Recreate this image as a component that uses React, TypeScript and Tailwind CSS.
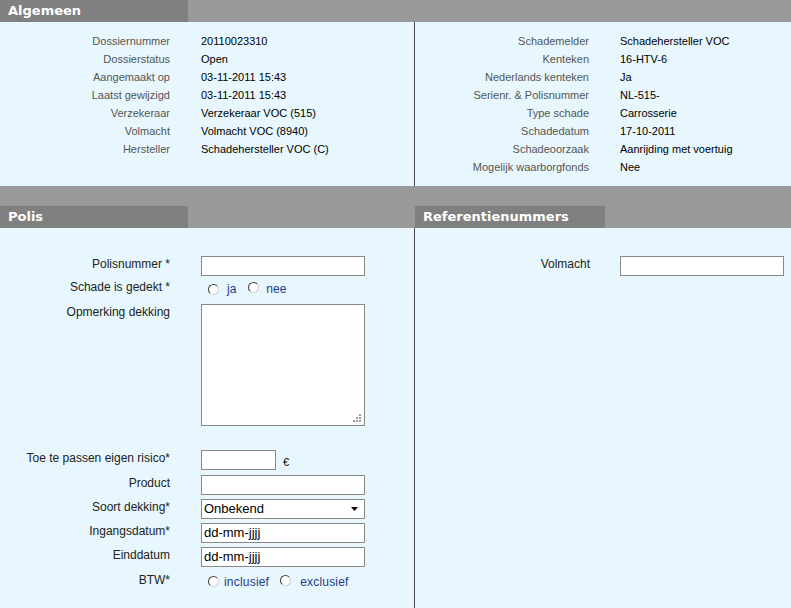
import React from 'react';

const ALG_LEFT = [
  ['Dossiernummer', '20110023310'],
  ['Dossierstatus', 'Open'],
  ['Aangemaakt op', '03-11-2011 15:43'],
  ['Laatst gewijzigd', '03-11-2011 15:43'],
  ['Verzekeraar', 'Verzekeraar VOC (515)'],
  ['Volmacht', 'Volmacht VOC (8940)'],
  ['Hersteller', 'Schadehersteller VOC (C)'],
];

const ALG_RIGHT = [
  ['Schademelder', 'Schadehersteller VOC'],
  ['Kenteken', '16-HTV-6'],
  ['Nederlands kenteken', 'Ja'],
  ['Serienr. & Polisnummer', 'NL-515-'],
  ['Type schade', 'Carrosserie'],
  ['Schadedatum', '17-10-2011'],
  ['Schadeoorzaak', 'Aanrijding met voertuig'],
  ['Mogelijk waarborgfonds', 'Nee'],
];

function Tab({ label, w }: { label: string; w: string }) {
  return (
    <div className={`${w} h-[22px] bg-[#808080] text-white font-bold text-[13px] leading-[22px] pl-[8px] font-['DejaVu_Sans',sans-serif]`}>
      {label}
    </div>
  );
}

function Radio() {
  return (
    <span className="inline-block w-[11px] h-[11px] rounded-full bg-white border border-t-[#404040] border-l-[#404040] border-r-[#d0d0d0] border-b-[#d0d0d0]" />
  );
}

function Field({ label, top = 'pt-[0px]', children }: { label: string; top?: string; children: React.ReactNode }) {
  return (
    <div className="flex items-start">
      <div className={`w-[170px] text-right text-[12px] leading-[16px] text-[#222] ${top}`}>{label}</div>
      <div className="ml-[31px]">{children}</div>
    </div>
  );
}

const inputCls = 'block w-[164px] h-[20px] border border-[#888] bg-white px-[2px] text-[13px] text-black outline-none';

export default function App() {
  return (
    <div className="w-[791px] h-[608px] overflow-hidden bg-[#e7f7fd] font-['Liberation_Sans',Arial,sans-serif]">
      {/* Algemeen */}
      <div className="flex h-[22px] bg-[#999]">
        <Tab label="Algemeen" w="w-[188px]" />
      </div>
      <div className="flex h-[164px]">
        <div className="w-[415px] border-r border-[#4a4a4a] pt-[10px]">
          {ALG_LEFT.map(([l, v]) => (
            <div key={l} className="flex h-[18px] items-center text-[11px]">
              <div className="w-[170px] text-right text-[#555]">{l}</div>
              <div className="ml-[31px] text-black">{v}</div>
            </div>
          ))}
        </div>
        <div className="flex-1 pt-[10px]">
          {ALG_RIGHT.map(([l, v]) => (
            <div key={l} className="flex h-[18px] items-center text-[11px]">
              <div className="w-[174px] text-right text-[#555]">{l}</div>
              <div className="ml-[31px] text-black">{v}</div>
            </div>
          ))}
        </div>
      </div>
      <div className="h-[20px] bg-[#999]" />

      {/* Polis / Referentienummers */}
      <div className="flex h-[402px]">
        <div className="w-[415px] flex flex-col">
          <div className="flex h-[22px] bg-[#999]">
            <Tab label="Polis" w="w-[188px]" />
          </div>
          <div className="flex-1 border-r border-[#4a4a4a] pt-[28px]">
            <Field label="Polisnummer *">
              <input className={inputCls} />
            </Field>
            <div className="mt-[2px]">
              <Field label="Schade is gedekt *" top="pt-[1px]">
                <div className="flex items-center h-[22px] pl-[7px] text-[12px] text-[#1f3a8a]">
                  <Radio />
                  <span className="ml-[8px]">ja</span>
                  <span className="ml-[12px]"><Radio /></span>
                  <span className="ml-[7px]">nee</span>
                </div>
              </Field>
            </div>
            <div className="mt-[4px]">
              <Field label="Opmerking dekking" top="pt-[0px]">
                <div className="relative">
                  <textarea className="block w-[164px] h-[122px] border border-[#888] bg-white resize-none outline-none" />
                  <svg className="absolute right-[3px] bottom-[3px]" width="9" height="9" viewBox="0 0 9 9">
                    <rect x="6" y="0" width="2" height="2" fill="#999" />
                    <rect x="3" y="3" width="2" height="2" fill="#999" />
                    <rect x="6" y="3" width="2" height="2" fill="#999" />
                    <rect x="0" y="6" width="2" height="2" fill="#999" />
                    <rect x="3" y="6" width="2" height="2" fill="#999" />
                    <rect x="6" y="6" width="2" height="2" fill="#999" />
                  </svg>
                </div>
              </Field>
            </div>
            <div className="mt-[24px]">
              <Field label="Toe te passen eigen risico*">
                <div className="flex items-center">
                  <input className="block w-[75px] h-[20px] border border-[#888] bg-white outline-none" />
                  <span className="ml-[7px] mt-[4px] text-[11px] text-black">€</span>
                </div>
              </Field>
            </div>
            <div className="mt-[4px]">
              <Field label="Product">
                <input className={inputCls} />
              </Field>
            </div>
            <div className="mt-[4px]">
              <Field label="Soort dekking*">
                <div className="relative w-[164px] h-[20px] border border-[#888] bg-white text-[13px] leading-[18px] pl-[2px] text-black">
                  Onbekend
                  <svg className="absolute right-[6px] top-[7px]" width="7" height="4" viewBox="0 0 7 4">
                    <path d="M0 0H7L3.5 4Z" fill="#000" />
                  </svg>
                </div>
              </Field>
            </div>
            <div className="mt-[4px]">
              <Field label="Ingangsdatum*">
                <input className={inputCls} defaultValue="dd-mm-jjjj" />
              </Field>
            </div>
            <div className="mt-[4px]">
              <Field label="Einddatum">
                <input className={inputCls} defaultValue="dd-mm-jjjj" />
              </Field>
            </div>
            <div className="mt-[4px]">
              <Field label="BTW*" top="pt-[1px]">
                <div className="flex items-center h-[22px] pl-[7px] text-[12px] text-[#1f3a8a]">
                  <Radio />
                  <span className="ml-[5px] tracking-[0.2px]">inclusief</span>
                  <span className="ml-[11px]"><Radio /></span>
                  <span className="ml-[9px] tracking-[0.2px]">exclusief</span>
                </div>
              </Field>
            </div>
          </div>
        </div>
        <div className="flex-1 flex flex-col">
          <div className="flex h-[22px] bg-[#999]">
            <Tab label="Referentienummers" w="w-[190px]" />
          </div>
          <div className="flex-1 pt-[28px]">
            <div className="flex items-start">
              <div className="w-[175px] text-right text-[12px] leading-[16px] text-[#222]">Volmacht</div>
              <div className="ml-[30px]">
                <input className={inputCls} />
              </div>
            </div>
          </div>
        </div>
      </div>
    </div>
  );
}
